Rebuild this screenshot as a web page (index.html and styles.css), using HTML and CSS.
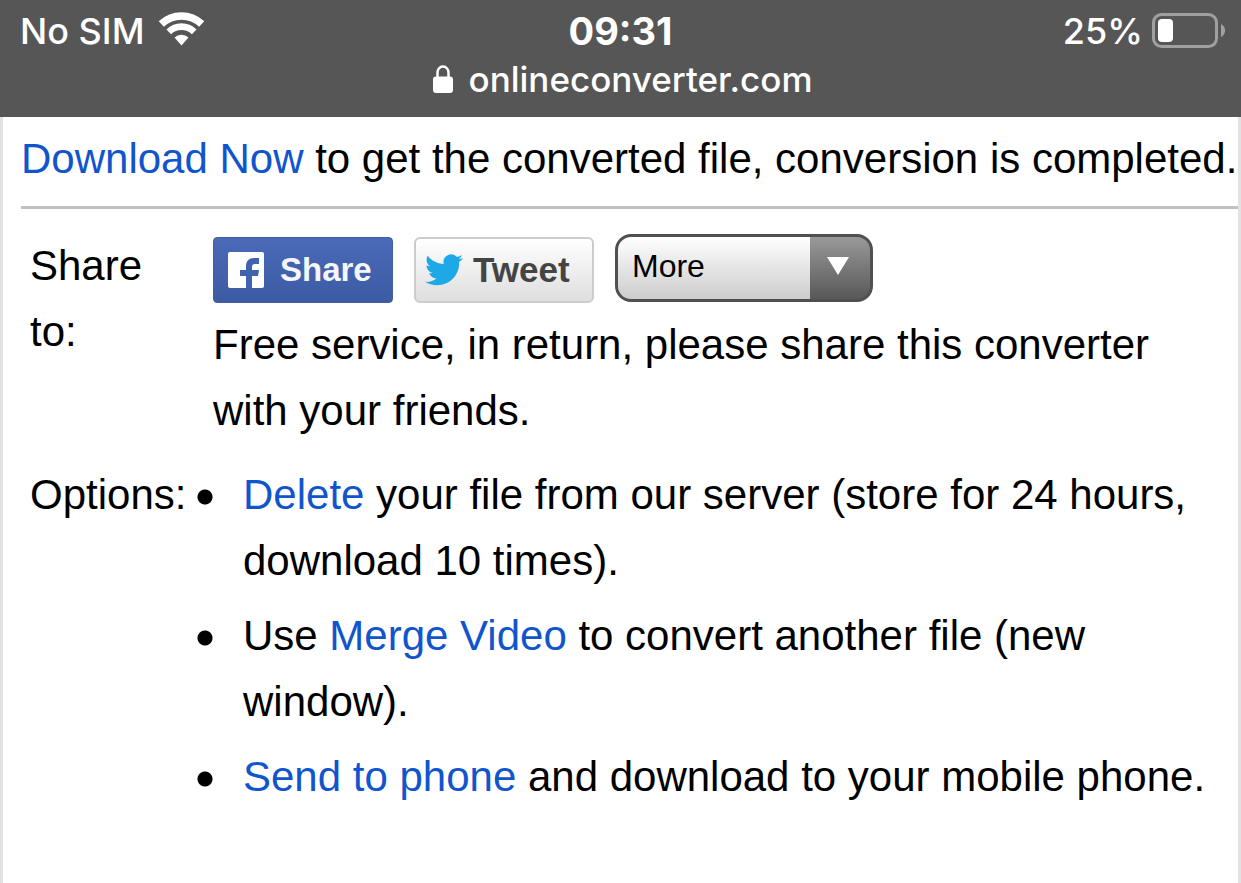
FILE: index.html
```html
<!DOCTYPE html>
<html lang="en">
<head>
    <meta charset="UTF-8">
    <meta name="viewport" content="width=device-width, initial-scale=1.0">
    <title>onlineconverter.com</title>
    <link rel="stylesheet" href="styles.css">
</head>
<body>
    <header class="browser-bar">
        <div class="status">
            <div class="carrier">
                <span>No SIM</span>
                <svg class="wifi" viewBox="0 0 45 34" aria-hidden="true">
                    <path d="M2.300 12A29.200 29.200 0 0 1 42.700 12" fill="none" stroke="#fff" stroke-width="7.500"/>
                    <path d="M9.800 19.800A18.400 18.400 0 0 1 35.200 19.800" fill="none" stroke="#fff" stroke-width="6.700"/>
                    <path d="M22.500 33.500L15.500 25.400A10.500 10.500 0 0 1 29.500 25.400Z" fill="#fff"/>
                </svg>
            </div>
            <div class="clock">09:31</div>
            <div class="power">
                <span>25%</span>
                <svg class="battery" viewBox="0 0 74 36" aria-hidden="true">
                    <rect x="2.500" y="1.500" width="63" height="32" rx="8" fill="none" stroke="#a0a0a0" stroke-width="3"/>
                    <rect x="7" y="6" width="15" height="23" rx="4" fill="#fff"/>
                    <path d="M70 11c5.500 3 5.500 10 0 13z" fill="#a0a0a0"/>
                </svg>
            </div>
        </div>
        <div class="address">
            <svg class="lock" viewBox="0 0 20 28" aria-hidden="true">
                <path d="M4.500 14V7.500a5.500 6 0 0 1 11 0V14" fill="none" stroke="#fff" stroke-width="2.500"/>
                <rect x="0" y="11.500" width="20" height="16.500" rx="3" fill="#fff"/>
            </svg>
            <span>onlineconverter.com</span>
        </div>
    </header>

    <main class="content">
        <p class="message"><a href="#download">Download Now</a> to get the converted file, conversion is completed.</p>

        <div class="details">
            <div class="label">Share to:</div>
            <div class="share">
                <div class="share-buttons">
                    <button type="button" class="btn facebook">
                        <svg class="fb-icon" viewBox="0 0 36 36" aria-hidden="true">
                            <rect width="36" height="36" rx="2" fill="#fff"/>
                            <path d="M18 36V24h-6v-6h6v-4c0-5 3-8 8-8h5v6h-4c-2 0-3 1-3 3v3h7l-1 6h-6v12z" fill="#4162ae"/>
                        </svg>
                        Share
                    </button>
                    <button type="button" class="btn twitter">
                        <svg class="tw-icon" viewBox="0 0 38 32" aria-hidden="true">
                            <path d="M38 4c-1.400.6-2.900 1-4.400 1.200C35.200 4.200 36.300 2.700 36.900 1c-1.500.9-3.200 1.500-4.900 1.900A7.800 7.800 0 0 0 18.700 10C12.200 9.700 6.500 6.600 2.600 1.800 .5 5.500 1.600 9.900 5 12.200c-1.300 0-2.500-.4-3.500-.9 0 3.700 2.600 6.900 6.200 7.700-1.200.3-2.400.3-3.500.1 1 3.100 3.900 5.300 7.300 5.400A15.700 15.700 0 0 1 0 27.800C3.400 30 7.500 31.300 12 31.300 26.500 31.300 35 19.100 34.100 8 35.700 6.900 37 5.500 38 4z" fill="#1fa8e8"/>
                        </svg>
                        Tweet
                    </button>
                    <div class="more">
                        <select class="more-select" aria-label="More ways to share">
                            <option>More</option>
                        </select>
                    </div>
                </div>
                <p class="note">Free service, in return, please share this converter with your friends.</p>
            </div>

            <div class="label">Options:</div>
            <ul class="options">
                <li><a href="#delete">Delete</a> your file from our server (store for 24 hours, download 10 times).</li>
                <li>Use <a href="#merge">Merge Video</a> to convert another file (new window).</li>
                <li><a href="#send">Send to phone</a> and download to your mobile phone.</li>
            </ul>
        </div>
    </main>
</body>
</html>
```
FILE: styles.css
```css
* {
    box-sizing: border-box;
}
body {
    margin: 0;
    min-height: 100vh;
    display: flex;
    flex-direction: column;
    font-family: "Liberation Sans", Arial, sans-serif;
    font-size: 42px;
    line-height: 66px;
    color: #000;
    background-color: #fff;
}
a {
    color: #1155cc;
    text-decoration: none;
}

/* phone status and address bar */
.browser-bar {
    padding: 7px 16px 14px;
    background-color: #565656;
    color: #fff;
    font-family: Inter, sans-serif;
    font-size: 35px;
    line-height: 48px;
    font-weight: 500;
}
.status {
    display: grid;
    grid-template-columns: 1fr auto 1fr;
    align-items: center;
    font-size: 36px;
}
.carrier, .power, .address {
    display: flex;
    align-items: center;
}
.carrier {
    gap: 14px;
    padding-left: 4px;
}
.power {
    justify-content: flex-end;
    gap: 8px;
}
.clock {
    font-size: 38px;
    font-weight: 700;
}
.wifi {
    width: 45px;
    height: 34px;
    margin-bottom: 4px;
}
.battery {
    width: 74px;
    height: 36px;
}
.address {
    justify-content: center;
    gap: 16px;
    padding-left: 4px;
}
.lock {
    width: 20px;
    height: 28px;
}

/* page */
.content {
    flex: 1;
    padding: 9px 0 0 18px;
    border-left: 3px solid #e2e2e2;
    border-right: 3px solid #e2e2e2;
}
.message {
    margin: 0;
    padding-bottom: 14px;
    border-bottom: 3px solid #c0c0c0;
    white-space: nowrap;
}
.details {
    display: grid;
    grid-template-columns: 152px 1fr;
    column-gap: 31px;
    row-gap: 18px;
    padding: 24px 20px 0 9px;
}
.share-buttons {
    display: flex;
    align-items: center;
    gap: 21px;
    height: 70px;
}
.btn {
    display: flex;
    align-items: center;
    height: 66px;
    width: 180px;
    margin-top: 4px;
    font-family: "Liberation Sans", Arial, sans-serif;
    font-size: 33px;
    font-weight: bold;
    border-radius: 4px;
    cursor: pointer;
}
.facebook {
    padding: 0 14px;
    gap: 16px;
    border: 1px solid #3f5f9f;
    background: linear-gradient(#4a6ab8, #3b5ba4);
    color: #f4f6fb;
}
.fb-icon {
    width: 36px;
    height: 36px;
}
.twitter {
    padding: 0 9px;
    gap: 10px;
    border: 2px solid #ccc;
    border-radius: 6px;
    background: linear-gradient(#fff, #dedede);
    color: #444;
    font-size: 35px;
}
.tw-icon {
    width: 38px;
    height: 32px;
}
.more {
    position: relative;
    width: 258px;
}
/* arrow drawn over the drop-down */
.more::after {
    content: "";
    position: absolute;
    right: 24px;
    top: 23px;
    border: 11px solid transparent;
    border-top: 18px solid #fff;
    border-bottom: 0;
    pointer-events: none;
}
.more-select {
    display: block;
    width: 100%;
    height: 68px;
    padding: 0 80px 4px 14px;
    border: 3px solid #505050;
    border-radius: 16px;
    appearance: none;
    background: linear-gradient(#999, #585858) right / 60px 100% no-repeat, linear-gradient(#fff, #ccc);
    color: #000;
    font-family: "Liberation Sans", Arial, sans-serif;
    font-size: 32px;
}
.note {
    margin: 9px 0 0;
}
/* the bullets hang out to the left of the column */
.options {
    margin: 0 0 0 -16px;
    padding: 0;
    list-style: none;
}
.options li {
    margin-bottom: 9px;
    padding-left: 46px;
    background: radial-gradient(circle, #000 7px, transparent 8px) 0 27px / 16px 16px no-repeat;
}
```
